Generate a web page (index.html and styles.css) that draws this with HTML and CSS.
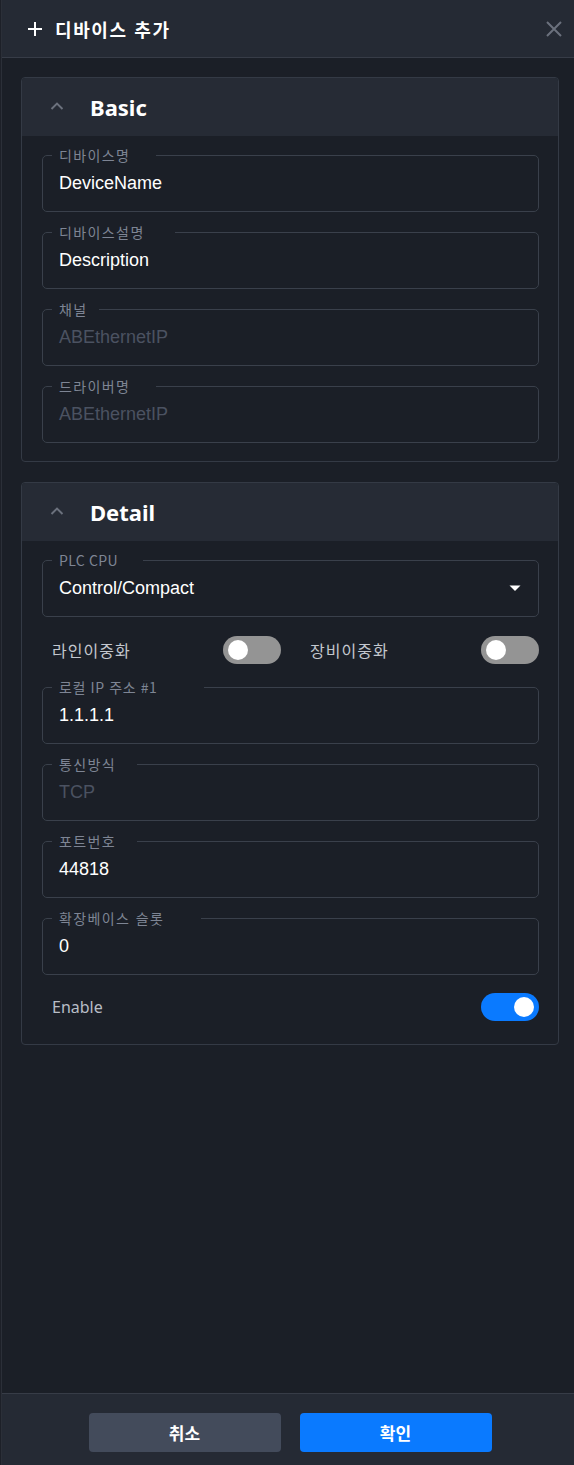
FILE: index.html
```html
<!DOCTYPE html>
<html lang="ko">
<head>
<meta charset="utf-8">
<title>디바이스 추가</title>
<link rel="stylesheet" href="styles.css">
</head>
<body>
<div class="edge"></div>
<div class="panel">
  <header class="panel-header">
    <svg class="icon-plus" width="16" height="16" viewBox="0 0 16 16"><path d="M8 1v14M1 8h14" stroke="#fff" stroke-width="2" fill="none"/></svg>
    <h1 class="panel-title">디바이스 추가</h1>
    <svg class="icon-close" width="16" height="16" viewBox="0 0 16 16"><path d="M1 1l14 14M15 1L1 15" stroke="#6b717d" stroke-width="2" fill="none"/></svg>
  </header>

  <main class="panel-body">
    <section class="card basic">
      <div class="card-header">
        <svg class="icon-chevron" width="14" height="8" viewBox="0 0 14 8"><path d="M1.5 7L7 1.6 12.5 7" stroke="#6b717d" stroke-width="2" fill="none"/></svg>
        <h2 class="card-title">Basic</h2>
      </div>
      <div class="card-content">
        <fieldset class="field">
          <legend class="field-label" data-label="디바이스명"><span>디바이스명</span></legend>
          <div class="field-value">DeviceName</div>
        </fieldset>
        <fieldset class="field">
          <legend class="field-label" data-label="디바이스설명"><span>디바이스설명</span></legend>
          <div class="field-value">Description</div>
        </fieldset>
        <fieldset class="field">
          <legend class="field-label" data-label="채널"><span>채널</span></legend>
          <div class="field-value disabled">ABEthernetIP</div>
        </fieldset>
        <fieldset class="field">
          <legend class="field-label" data-label="드라이버명"><span>드라이버명</span></legend>
          <div class="field-value disabled">ABEthernetIP</div>
        </fieldset>
      </div>
    </section>

    <section class="card">
      <div class="card-header">
        <svg class="icon-chevron" width="14" height="8" viewBox="0 0 14 8"><path d="M1.5 7L7 1.6 12.5 7" stroke="#6b717d" stroke-width="2" fill="none"/></svg>
        <h2 class="card-title">Detail</h2>
      </div>
      <div class="card-content detail">
        <fieldset class="field">
          <legend class="field-label latin" data-label="PLC CPU"><span>PLC CPU</span></legend>
          <div class="field-value select">Control/Compact
            <svg class="icon-caret" width="12" height="6" viewBox="0 0 12 6"><path d="M0.5 0.5h11L6 6z" fill="#fff"/></svg>
          </div>
        </fieldset>
        <div class="toggle-row">
          <div class="toggle-item">
            <span class="toggle-label">라인이중화</span>
            <span class="switch"><span class="knob"></span></span>
          </div>
          <div class="toggle-item">
            <span class="toggle-label">장비이중화</span>
            <span class="switch"><span class="knob"></span></span>
          </div>
        </div>
        <fieldset class="field">
          <legend class="field-label mixed" data-label="로컬 IP 주소 #1"><span>로컬 IP 주소 #1</span></legend>
          <div class="field-value">1.1.1.1</div>
        </fieldset>
        <fieldset class="field">
          <legend class="field-label" data-label="통신방식"><span>통신방식</span></legend>
          <div class="field-value disabled">TCP</div>
        </fieldset>
        <fieldset class="field">
          <legend class="field-label" data-label="포트번호"><span>포트번호</span></legend>
          <div class="field-value">44818</div>
        </fieldset>
        <fieldset class="field">
          <legend class="field-label" data-label="확장베이스 슬롯"><span>확장베이스 슬롯</span></legend>
          <div class="field-value">0</div>
        </fieldset>
        <div class="enable-row">
          <span class="enable-label">Enable</span>
          <span class="switch on"><span class="knob"></span></span>
        </div>
      </div>
    </section>
  </main>

  <footer class="panel-footer">
    <button class="btn btn-cancel">취소</button>
    <button class="btn btn-ok">확인</button>
  </footer>
</div>
</body>
</html>
```

FILE: styles.css
```css
* { box-sizing: border-box; }
html, body { margin: 0; padding: 0; }
body {
  width: 574px;
  height: 1465px;
  background: #1a1d24;
  display: flex;
  font-family: "Noto Sans CJK KR", "Noto Sans", sans-serif;
  overflow: hidden;
}
.edge {
  width: 2px;
  flex: none;
  background: #1d2028;
  border-right: 1px solid #2b2f38;
}
.panel {
  flex: 1;
  display: flex;
  flex-direction: column;
  background: #1b1f27;
  height: 100%;
}
.panel-header {
  height: 58px;
  flex: none;
  display: flex;
  align-items: center;
  padding: 0 12px 0 25px;
  background: #252a34;
  border-bottom: 1px solid #373c47;
}
.icon-plus { flex: none; }
.panel-title {
  margin: 0 0 0 12px;
  flex: 1;
  font-size: 18px;
  letter-spacing: 1.6px;
  font-weight: 700;
  color: #ffffff;
  line-height: 24px;
}
.icon-close { flex: none; }

.panel-body {
  flex: 1;
  padding: 19px 15px 0 19px;
  display: flex;
  flex-direction: column;
  gap: 20px;
}
.card {
  border: 1px solid #343a45;
  border-radius: 4px;
  background: #1b1f27;
  overflow: hidden;
}
.card-header {
  height: 58px;
  display: flex;
  align-items: center;
  background: #262b35;
  padding-left: 28px;
}
.icon-chevron { flex: none; margin-top: -2px; }
.card-title {
  margin: 0 0 0 26px;
  font-family: "Noto Sans", sans-serif;
  font-size: 22px;
  font-weight: 700;
  color: #ffffff;
  line-height: 30px;
}
.card-content {
  padding: 12px 19px 18px 20px;
  display: flex;
  flex-direction: column;
  gap: 13px;
}
.card-content.detail { padding-top: 12px; padding-bottom: 23px; }

.field {
  margin: 0;
  padding: 0 16px;
  border: 1px solid #3a404b;
  border-radius: 5px;
  min-width: 0;
}
.field-label {
  display: grid;
  margin-left: -7px;
  padding: 0 2px 0 7px;
  font-size: 14px;
  line-height: 14px;
  letter-spacing: 1.4px;
  color: #7e8594;
}
.field-label.latin { letter-spacing: 0.3px; }
.field-label.mixed { letter-spacing: 0.6px; }
.field-label span { grid-area: 1 / 1; white-space: nowrap; }
.field-label::after {
  content: attr(data-label);
  grid-area: 1 / 1;
  font-size: 18.6px;
  letter-spacing: 1.9px;
  height: 0;
  overflow: hidden;
  visibility: hidden;
  white-space: nowrap;
}
.field-label.latin::after { letter-spacing: 0.9px; }
.field-value {
  height: 49px;
  padding-bottom: 7px;
  display: flex;
  align-items: center;
  font-family: "Liberation Sans", Arial, sans-serif;
  font-size: 18px;
  color: #ffffff;
}
.field-value.disabled { color: #4b5261; }
.field-value.select { justify-content: space-between; }
.icon-caret { flex: none; margin-right: 1px; }

.toggle-row {
  display: grid;
  grid-template-columns: 1fr 1fr;
  column-gap: 19px;
  margin: 6px 0 3px;
}
.toggle-item, .enable-row {
  display: flex;
  align-items: center;
  justify-content: space-between;
  padding-left: 10px;
}
.toggle-label {
  font-size: 16px;
  letter-spacing: 1px;
  color: #c3c7ce;
}
.enable-row { margin-top: 5px; }
.enable-label {
  font-family: "Noto Sans", sans-serif;
  font-size: 16px;
  color: #b8bdc6;
}
.switch {
  width: 58px;
  height: 28px;
  border-radius: 14px;
  background: #949494;
  display: flex;
  align-items: center;
  padding: 0 5px;
  flex: none;
}
.switch.on { background: #0a7aff; justify-content: flex-end; }
.knob {
  width: 20px;
  height: 20px;
  border-radius: 50%;
  background: #ffffff;
}

.panel-footer {
  height: 72px;
  flex: none;
  background: #252a34;
  border-top: 1px solid #373c47;
  display: flex;
  justify-content: center;
  align-items: flex-start;
  gap: 19px;
  padding: 19px 0 0 4px;
}
.btn {
  width: 192px;
  height: 39px;
  border: none;
  border-radius: 4px;
  font-family: "Noto Sans CJK KR", sans-serif;
  font-size: 17px;
  font-weight: 700;
  color: #ffffff;
}
.btn-cancel { background: #434b5b; }
.btn-ok { background: #0a7aff; }
```
